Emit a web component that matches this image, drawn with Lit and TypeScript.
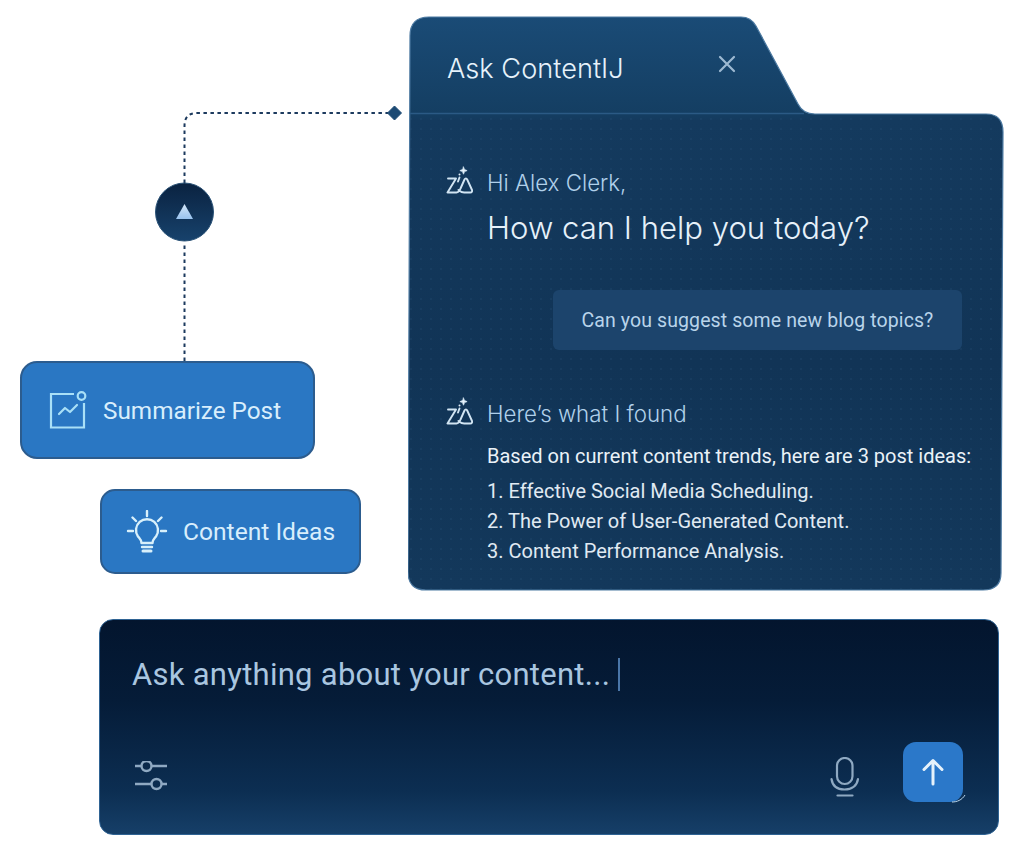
import { LitElement, html, css } from "lit";
import { customElement } from "lit/decorators.js";

const ziaLogo = html`<svg class="zia" viewBox="0 0 28 28" fill="none" stroke="#d2e5f3" stroke-width="1.9" stroke-linecap="round" stroke-linejoin="round">
  <path d="M3 12.5h8L2.5 26.5h9c2 0 3-1.5 4-4l4-9c.8-1.5 2-1.5 2.7 0l4.600 10c.8 1.800 0 3-1.600 3h-6c-2.500 0-4-1-5.700-2.500"/>
  <path d="M14.500 11.500l-1.500 4"/>
  <path d="M18.500 1l1 2.600 2.600 1-2.600 1-1 2.600-1-2.600-2.600-1 2.600-1z" fill="#e6f1f9" stroke-width=".8"/>
  <circle cx="14.500" cy="8.500" r="1" fill="#e6f1f9" stroke="none"/>
</svg>`;

const shape = "M2 20Q2 1 21 1H333Q343 1 348 10L390 88Q395 98 407 98H578Q595 98 595 116L593 557Q593 574 575 574H18Q0 574 0 556Z";

@customElement("app-root")
export class AppRoot extends LitElement {
  static styles = css`
    :host { display: block; width: 1024px; height: 851px; background: #fff; overflow: hidden; font-family: Roboto, "Liberation Sans", sans-serif; }
    .top { display: flex; padding-top: 16px; }
    .left { width: 408px; padding-top: 80px; flex: none; }
    .connector { display: block; width: 408px; height: 265px; }
    .action { display: flex; align-items: center; box-sizing: border-box; background: #2a77c3; border: 2px solid #2c5c8e; color: #d8eefc; }
    .summary { width: 295px; height: 98px; margin-left: 20px; border-radius: 17px; padding-left: 27px; gap: 16px; font-size: 24.3px; }
    .ideas { width: 261px; height: 85px; margin: 30px 0 0 100px; border-radius: 15px; padding-left: 24px; gap: 15px; font-size: 24.6px; }
    .summary svg { width: 38px; height: 38px; flex: none; }
    .ideas svg { width: 42px; height: 44px; flex: none; }
    .panel { position: relative; width: 596px; height: 575px; flex: none; }
    .panel-bg { position: absolute; inset: 0; width: 100%; height: 100%; }
    .panel-inner { position: relative; }
    .head { display: flex; align-items: center; height: 104px; padding-left: 39px; }
    .title { font-family: Inter, sans-serif; font-weight: 300; font-size: 27.200px; color: #e6f2fb; width: 271px; }
    .close { width: 18px; height: 18px; margin-top: -8px; }
    .row { display: flex; align-items: center; padding-left: 37px; gap: 14px; height: 30px; }
    .zia { width: 28px; height: 28px; flex: none; margin-top: -5px; }
    .lead { font-family: Inter, sans-serif; font-weight: 300; font-size: 22.300px; color: #b0d0ea; }
    .hi { margin-top: 47px; }
    .help { margin: 9px 0 0 79px; font-family: Inter, sans-serif; font-weight: 300; font-size: 31.100px; line-height: 44px; color: #e6f1fa; }
    .bubble { box-sizing: border-box; width: 409px; height: 60px; margin: 40px 0 0 145px; border-radius: 6px; background: #1c446c; color: #b9d4ea; font-size: 19.500px; display: flex; align-items: center; justify-content: center; letter-spacing: .1px; }
    .found { margin-top: 48px; }
    .answer { margin: 13px 0 0 79px; color: #eaf2f8; font-size: 20px; line-height: 30px; }
    ol { list-style: none; margin: 5px 0 0 79px; padding: 0; color: #e0eaf3; font-size: 20px; line-height: 30px; }
    .input { box-sizing: border-box; display: flex; flex-direction: column; width: 900px; height: 216px; margin: 28px 0 0 99px; padding: 34px 35px 32px 32px; border-radius: 14px; border: 1.500px solid #2f6393; background: linear-gradient(180deg, #03152e 0%, #051c38 38%, #0c2e52 80%, #163f68 100%); }
    .prompt { display: flex; align-items: center; height: 40px; color: #a9c6e0; font-size: 31px; letter-spacing: .27px; }
    .caret { width: 2px; height: 33px; margin-left: 8px; background: #4a76a8; }
    .tools { display: flex; align-items: center; margin-top: auto; padding-left: 2px; }
    .sliders { width: 34px; height: 30px; margin-top: 8px; }
    .mic { width: 30px; height: 40px; margin-left: auto; margin-top: 9px; }
    .send { position: relative; display: flex; align-items: center; justify-content: center; width: 60px; height: 60px; margin-left: 43px; border-radius: 13px; background: #2b78c9; }
    .send svg { width: 24px; height: 28px; }
    .send .glint { position: absolute; right: -3px; bottom: -1px; width: 15px; height: 9px; }
  `;

  render() {
    return html`
      <div class="top">
        <div class="left">
          <svg class="connector" viewBox="0 0 408 265" fill="none">
            <defs>
              <linearGradient id="knob" x1="0" y1="0" x2="0" y2="1"><stop offset="0" stop-color="#0a2240"/><stop offset="1" stop-color="#17426c"/></linearGradient>
              <linearGradient id="tri" x1="0" y1="0" x2="0" y2="1"><stop offset="0" stop-color="#d3e6f8"/><stop offset="1" stop-color="#98c2ee"/></linearGradient>
            </defs>
            <path d="M184.500 265V147M184.500 87V30Q184.500 17 197 17H388" stroke="#1c3a5e" stroke-width="2" stroke-dasharray="3.500 3.500"/>
            <path d="M394.500 10l7 7-7 7-7-7z" fill="#1c4a74" stroke="#1c4a74" stroke-linejoin="round"/>
            <circle cx="184.500" cy="116" r="29" fill="url(#knob)" stroke="#2c5478" stroke-width="1"/>
            <path d="M184.500 108l8.500 15h-17z" fill="url(#tri)"/>
          </svg>
          <div class="action summary">
            <svg viewBox="0 0 38 38" fill="none" stroke="#a9e0f7" stroke-width="2.200">
              <path d="M25 3H2v33.500h33V12"/>
              <circle cx="32.500" cy="5" r="3.800"/>
              <path d="M10 23l6-6 5 4 7-7" stroke-linejoin="round" stroke-linecap="round"/>
            </svg>
            <span>Summarize Post</span>
          </div>
          <div class="action ideas">
            <svg viewBox="0 0 42 44" fill="none" stroke="#d8f0fb" stroke-width="2.400" stroke-linecap="round">
              <path d="M21 1v5M6.500 7.500l3.500 3.500M35.500 7.500L32 11M2 21h5M35 21h5"/>
              <path d="M15.500 33c0-3-1.500-4-3.500-6.500a11 11 0 1 1 18 0c-2 2.500-3.500 3.500-3.500 6.500z" stroke-linejoin="round"/>
              <path d="M16 37h10"/>
              <path d="M17 41h8" stroke-width="3"/>
            </svg>
            <span>Content Ideas</span>
          </div>
        </div>
        <div class="panel">
          <svg class="panel-bg" viewBox="0 0 596 575" fill="none">
            <defs>
              <linearGradient id="pg" x1="0" y1="0" x2="0" y2="1">
                <stop offset="0" stop-color="#1a4b76"/>
                <stop offset=".17" stop-color="#143e62"/>
                <stop offset=".18" stop-color="#143a5e"/>
                <stop offset=".6" stop-color="#113456"/>
                <stop offset="1" stop-color="#13385b"/>
              </linearGradient>
              <pattern id="dots" width="10" height="10" patternUnits="userSpaceOnUse"><circle cx="3" cy="3" r=".9" fill="#2a5580" opacity=".3"/></pattern>
              <clipPath id="bodyclip"><rect x="0" y="98" width="596" height="477"/></clipPath>
            </defs>
            <path d=${shape} fill="url(#pg)" stroke="#4d7aa2" stroke-width="1.200"/>
            <path d=${shape} fill="url(#dots)" clip-path="url(#bodyclip)"/>
            <path d="M2 97.500H396" stroke="#2b5a85" stroke-width="1.400"/>
          </svg>
          <div class="panel-inner">
            <div class="head">
              <span class="title">Ask ContentIJ</span>
              <svg class="close" viewBox="0 0 18 18" fill="none" stroke="#9db9d2" stroke-width="2.200" stroke-linecap="round"><path d="M2 2l14 14M16 2L2 16"/></svg>
            </div>
            <div class="row hi">${ziaLogo}<span class="lead">Hi Alex Clerk,</span></div>
            <div class="help">How can I help you today?</div>
            <div class="bubble">Can you suggest some new blog topics?</div>
            <div class="row found">${ziaLogo}<span class="lead">Here’s what I found</span></div>
            <div class="answer">Based on current content trends, here are 3 post ideas:</div>
            <ol>
              <li>1. Effective Social Media Scheduling.</li>
              <li>2. The Power of User-Generated Content.</li>
              <li>3. Content Performance Analysis.</li>
            </ol>
          </div>
        </div>
      </div>
      <div class="input">
        <div class="prompt"><span>Ask anything about your content...</span><i class="caret"></i></div>
        <div class="tools">
          <svg class="sliders" viewBox="0 0 34 30" fill="none" stroke="#8fa9c2" stroke-width="2.400">
            <path d="M1 5h6M18 5h15M1 23h16M28 23h5"/>
            <circle cx="12.500" cy="5" r="5"/><circle cx="22.500" cy="23" r="5"/>
          </svg>
          <svg class="mic" viewBox="0 0 30 40" fill="none" stroke="#8fa9c2" stroke-width="2.200" stroke-linecap="round">
            <rect x="7" y="1" width="15.500" height="26" rx="7.750"/>
            <path d="M1.500 22c1 7 6 10.500 13 10.500s12.500-3.500 13.500-10.500"/>
            <path d="M7.500 38.500h15"/>
          </svg>
          <div class="send">
            <svg viewBox="0 0 24 28" fill="none" stroke="#e6f2fb" stroke-width="3" stroke-linecap="round" stroke-linejoin="round"><path d="M12 26V2.500M3 11.500L12 2.500 21 11.500"/></svg>
            <svg class="glint" viewBox="0 0 15 9" fill="none" stroke="#bcd8ee" stroke-width="1"><path d="M1 8c5 0 10-2 13-7"/></svg>
          </div>
        </div>
      </div>
    `;
  }
}
